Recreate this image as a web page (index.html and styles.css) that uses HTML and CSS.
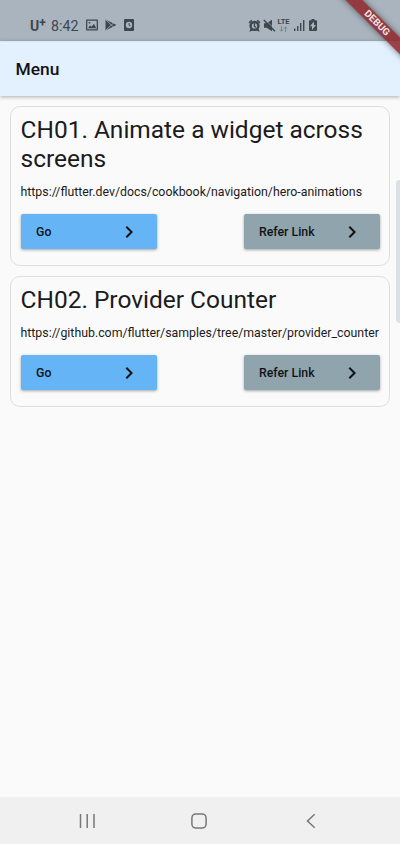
FILE: index.html
```html
<!DOCTYPE html>
<html lang="en">
<head>
<meta charset="utf-8">
<title>Menu</title>
<link rel="stylesheet" href="styles.css">
</head>
<body>
<div class="screen">
  <header class="status">
    <div class="status-left">
      <span class="carrier">U<sup>+</sup></span>
      <span class="time">8:42</span>
      <svg class="picture" width="12" height="12" viewBox="0 0 12 12"><path fill-rule="evenodd" d="M1 0.5h10a1 1 0 0 1 1 1v9a1 1 0 0 1-1 1H1a1 1 0 0 1-1-1v-9a1 1 0 0 1 1-1zM1.3 1.7v8.6h9.4V1.7zM2 9.3l2-3 1.500 1.500L8 4.800l2.200 4.500zM2.700 3h1.600v1.600H2.700z"/></svg>
      <svg class="play" width="12" height="12" viewBox="0 0 12 12"><path d="M0.5 0.5L11.5 6 0.5 11.5z"/><path class="cut" d="M1 1l7.5 7M1 11l7.5-7"/></svg>
      <svg class="clock" width="10" height="12" viewBox="0 0 10 12"><path fill-rule="evenodd" d="M1 0h8a1 1 0 0 1 1 1v10a1 1 0 0 1-1 1H1a1 1 0 0 1-1-1V1a1 1 0 0 1 1-1zM5 2.8a3.2 3.2 0 1 0 0 6.4 3.2 3.2 0 0 0 0-6.4zM4.6 4h.9v1.8l1.3.8-.5.7-1.7-1z"/></svg>
    </div>
    <div class="status-right">
      <svg width="13" height="13" viewBox="0 0 24 24"><path d="M23 6l-5-4.500-2 2 5.200 4.700zM8 3.500L6 1.500 1 6l2 2.200z"/><path fill-rule="evenodd" d="M12 3a9.500 9.500 0 1 0 0 19 9.500 9.500 0 0 0 0-19zm0 4.700a5 5 0 1 1 0 10 5 5 0 0 1 0-10zM10.600 8.500v5.600l4 2.600 1.200-1.900-2.700-1.700V8.500z"/><path d="M2.500 23.500l2-5.500 4.500 3zM21.500 23.500l-2-5.500-4.500 3z"/></svg>
      <svg class="mute" width="13" height="13" viewBox="0 0 13 13"><path d="M1 4.200h2.500L9 0.800v11.400L3.500 8.800H1z"/><path class="cut" d="M1.8 0.300L12.800 11.300"/><path class="slash" d="M0.800 1L12 12.200"/></svg>
      <span class="network"><span class="lte">LTE</span><svg width="9" height="6" viewBox="0 0 9 6"><path d="M2.500 0v5M0.800 3.500l1.700 1.700 1.700-1.700M6.500 6V1M4.800 2.500L6.500.8l1.700 1.700"/></svg></span>
      <svg class="signal" width="12" height="12" viewBox="0 0 12 12"><path d="M0 9.500h1.400v2.500H0zM3 7h1.400v5H3zM6 4h1.400v8H6zM9 1h1.400v11H9z"/></svg>
      <svg class="battery" width="8" height="12" viewBox="0 0 8 12"><path fill-rule="evenodd" d="M2.500 0h3v1.300H7a1 1 0 0 1 1 1V11a1 1 0 0 1-1 1H1a1 1 0 0 1-1-1V2.300a1 1 0 0 1 1-1h1.500zM4.700 2.600L1 7.200h2L3 11 7 6.100H5z"/></svg>
    </div>
  </header>
  <div class="appbar"><h1>Menu</h1></div>
  <main class="list">
    <section class="card">
      <h2>CH01. Animate a widget across screens</h2>
      <p>https://flutter.dev/docs/cookbook/navigation/hero-animations</p>
      <div class="actions">
        <button class="go">Go<svg width="24" height="24" viewBox="0 0 24 24"><path d="M10 6L8.590 7.410 13.170 12l-4.580 4.590L10 18l6-6z"/></svg></button>
        <button class="refer">Refer Link<svg width="24" height="24" viewBox="0 0 24 24"><path d="M10 6L8.590 7.410 13.170 12l-4.580 4.590L10 18l6-6z"/></svg></button>
      </div>
    </section>
    <section class="card">
      <h2>CH02. Provider Counter</h2>
      <p>https://github.com/flutter/samples/tree/master/provider_counter</p>
      <div class="actions">
        <button class="go">Go<svg width="24" height="24" viewBox="0 0 24 24"><path d="M10 6L8.590 7.410 13.170 12l-4.580 4.590L10 18l6-6z"/></svg></button>
        <button class="refer">Refer Link<svg width="24" height="24" viewBox="0 0 24 24"><path d="M10 6L8.590 7.410 13.170 12l-4.580 4.590L10 18l6-6z"/></svg></button>
      </div>
    </section>
  </main>
  <nav class="navbar">
    <svg width="16" height="16" viewBox="0 0 16 16"><path d="M1.500 1v14M8.200 1v14M15 1v14"/></svg>
    <svg width="16" height="16" viewBox="0 0 16 16"><rect x="0.900" y="0.900" width="14.200" height="14.200" rx="4"/></svg>
    <svg width="16" height="16" viewBox="0 0 16 16"><path d="M11.700 1.300L4.500 8l7.200 6.700"/></svg>
  </nav>
  <div class="edge-handle"></div>
  <div class="banner"><span>DEBUG</span></div>
</div>
</body>
</html>
```
FILE: styles.css
```css
* { box-sizing: border-box; }
body { margin: 0; font-family: Roboto, "Liberation Sans", sans-serif; color: #1b1b1c; }
.screen { position: relative; width: 400px; height: 844px; display: flex; flex-direction: column; overflow: hidden; background: #fafafa; }
svg { display: block; flex: none; }
.status { height: 41px; flex: none; display: flex; justify-content: space-between; align-items: center; padding: 9px 83px 0 30px; background: #a9b4be; color: #3e464e; fill: #3e464e; }
.status-left, .status-right { display: flex; align-items: center; }
.carrier { width: 21px; font-size: 14px; font-weight: 700; line-height: 16px; padding-top: 2px; }
.carrier sup { font-size: 12px; line-height: 0; vertical-align: 4px; }
.time { width: 35px; padding-top: 1px; font-size: 14.2px; line-height: 16px; }
.play { margin-left: 7px; }
.clock { margin-left: 7px; }
.cut { stroke: #a9b4be; stroke-width: .8; fill: none; }
.mute { margin-left: 2px; }
.slash { stroke: #3e464e; stroke-width: 1.500; }
.network { width: 13px; margin-left: 1px; display: flex; flex-direction: column; align-items: center; gap: 1px; }
.network svg { fill: none; stroke: #7c8790; stroke-width: 1; }
.lte { font-size: 7.500px; line-height: 7px; font-weight: 700; }
.signal { margin-left: 4px; }
.battery { margin-left: 3px; }
.appbar { height: 55px; flex: none; display: flex; align-items: center; padding: 0 15.5px 1px; background: #e3f0fd; box-shadow: 0 1px 4px rgba(0,0,0,.32); border-top: 1px solid #dae7f2; }
h1 { margin: 0; font-size: 17.400px; line-height: 24px; font-weight: 500; color: #101316; }
.list { flex: 1; display: flex; flex-direction: column; gap: 10px; padding: 10px 10px 0; }
.card { border: 1px solid #dedede; border-radius: 10px; padding: 8px 9.500px 16px; }
h2 { margin: 0; font-size: 24.470px; line-height: 29px; font-weight: 400; }
p { margin: 11px 0 14px; font-size: 12.330px; line-height: 16px; white-space: nowrap; }
.actions { display: flex; justify-content: space-between; }
button { width: 136px; height: 35px; padding: 0 15.5px; display: flex; align-items: center; justify-content: space-between; border: 0; border-radius: 2px; font: 500 12.300px/16px Roboto, sans-serif; color: #101316; fill: #101316; box-shadow: 0 1px 3px rgba(0,0,0,.35); }
.go { background: #64b4f6; }
.refer { background: #90a4ae; }
.navbar { height: 47px; flex: none; display: flex; justify-content: space-between; align-items: center; padding: 0 81px 0 79px; background: #f0f0f0; fill: none; stroke: #777; stroke-width: 1.500; }
.edge-handle { position: absolute; right: 0; top: 180px; width: 4px; height: 143px; border-radius: 4px 0 0 4px; background: #d9e1e6; }
.banner { position: absolute; left: 326.500px; top: 16.500px; width: 100px; height: 12px; display: flex; align-items: center; justify-content: center; transform: rotate(45deg); background: rgba(143,36,43,.86); box-shadow: 0 0 6px rgba(0,0,0,.5); color: #f0e4e5; font-size: 9.800px; line-height: 12px; font-weight: 700; }
```
